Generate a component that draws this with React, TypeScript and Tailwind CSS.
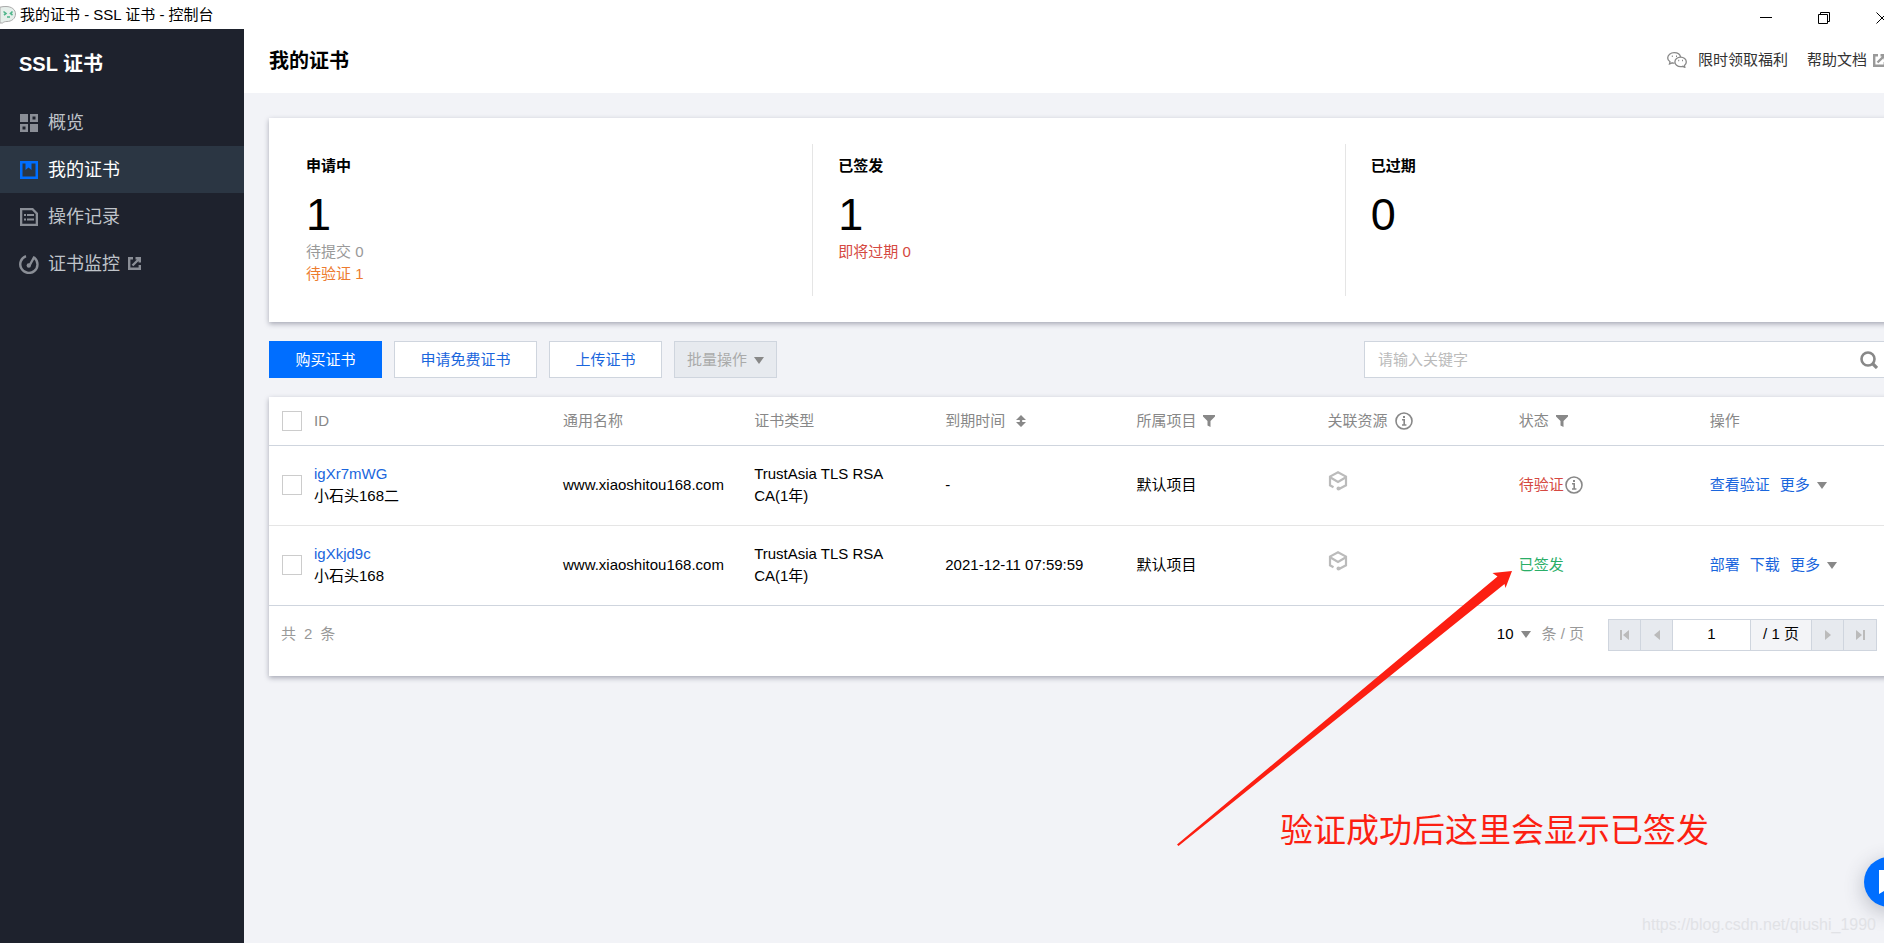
import type { ReactNode } from 'react';

const navItems = [
  { label: '概览', icon: <OverviewIcon /> },
  { label: '我的证书', icon: <CertIcon />, active: true },
  { label: '操作记录', icon: <LogIcon /> },
  { label: '证书监控', icon: <MonitorIcon />, external: true },
];

const rows = [
  {
    id: 'igXr7mWG',
    alias: '小石头168二',
    domain: 'www.xiaoshitou168.com',
    expires: '-',
    project: '默认项目',
    status: '待验证',
    pending: true,
    actions: ['查看验证'],
  },
  {
    id: 'igXkjd9c',
    alias: '小石头168',
    domain: 'www.xiaoshitou168.com',
    expires: '2021-12-11 07:59:59',
    project: '默认项目',
    status: '已签发',
    pending: false,
    actions: ['部署', '下载'],
  },
];

function OverviewIcon() {
  return (
    <svg className="w-[18px] h-[18px]" viewBox="0 0 18 18" fill="currentColor">
      <path d="M0 0h8v8H0zM10 10h8v8h-8z" />
      <path fillRule="evenodd" d="M10 0h8v8h-8zM12.500 2.500v3h3v-3zM0 10h8v8H0zM2.500 12.500v3h3v-3z" />
    </svg>
  );
}

function CertIcon() {
  return (
    <svg className="w-[18px] h-[18px]" viewBox="0 0 18 18" fill="#006eff">
      <path fillRule="evenodd" d="M0 0h18v18H0zM2.500 2.500v13h13v-13H11.500V9L8.500 6.500 5.500 9V2.500z" />
    </svg>
  );
}

function LogIcon() {
  return (
    <svg className="w-[18px] h-[18px]" viewBox="0 0 18 18" fill="currentColor">
      <path fillRule="evenodd" d="M0 0h13l5 5v13H0zM2.300 2.300v13.400h13.400V6L12 2.300z" />
      <path d="M4 6h2v2H4zM7 6h7v2H7zM4 10.500h2v2H4zM7 10.500h7v2H7z" />
    </svg>
  );
}

function MonitorIcon() {
  return (
    <svg className="w-5 h-5 -mx-px" viewBox="0 0 20 20" fill="none" stroke="currentColor" strokeWidth="2.400">
      <path d="M7 2.200A8.600 8.600 0 1 0 15.500 3.800" />
      <path d="M15.500 2.500 10.500 11.500" strokeWidth="2.400" />
      <circle cx="9.800" cy="11.500" r="2.200" fill="currentColor" stroke="none" />
    </svg>
  );
}

function ExternalIcon() {
  return (
    <svg className="w-[13px] h-[13px] shrink-0" viewBox="0 0 13 13" fill="none" stroke="currentColor" strokeWidth="2.400">
      <path d="M5 1.200H1.200v10.600h10.600V8" />
      <path d="M4.500 8.500 11 2M7.500 1.200h4.300v4.300" />
    </svg>
  );
}

function WechatIcon() {
  return (
    <svg className="w-5 h-4" viewBox="0 0 20 16" fill="none" stroke="#888" strokeWidth="1.300">
      <path d="M7.500 11.200c-.8 0-1.600-.1-2.300-.4L2.500 12l.5-2.200C1.500 8.800.7 7.500.7 5.900.7 3 3.600.7 7.200.7c3.200 0 5.900 1.900 6.400 4.400" />
      <path d="M13.600 5.200c-3.200 0-5.700 2.100-5.700 4.700s2.500 4.700 5.700 4.700c.7 0 1.400-.1 2-.3l2.200 1-.4-1.900c1.200-.9 1.900-2.100 1.900-3.500 0-2.600-2.500-4.700-5.700-4.700z" />
      <path d="M4.800 4.200h1M9 4.200h1M11.200 8.500h1M15 8.500h1" strokeWidth="1.400" />
    </svg>
  );
}

function InfoIcon() {
  return (
    <svg className="w-[18px] h-[18px] shrink-0" viewBox="0 0 18 18" fill="none" stroke="#888" strokeWidth="1.600">
      <circle cx="9" cy="9" r="8" />
      <path d="M7 7.800h2.200V13M7 13h4.400" />
      <path d="M8 5h2" strokeWidth="2" />
    </svg>
  );
}

function FilterIcon() {
  return (
    <svg className="w-3 h-3" viewBox="0 0 12 12" fill="#888">
      <path d="M0 0h12v1.500L7.500 6v6l-3-1.500V6L0 1.500z" />
    </svg>
  );
}

function SortIcon() {
  return (
    <svg className="w-[10px] h-3" viewBox="0 0 10 12" fill="#888">
      <path d="M5 0l5 5H6.200v2H10l-5 5-5-5h3.800V5H0z" />
    </svg>
  );
}

function CubeIcon() {
  return (
    <svg className="w-5 h-5 mb-2" viewBox="0 0 20 20" fill="none" stroke="#bbb" strokeWidth="2.200">
      <path d="M5.500 16.300 2 14.300V5.600L10 1.300l8 4.300v8.700l-6.500 3.500" />
      <path d="M2.500 6.500 10 11l7.500-4.500" />
      <circle cx="10.500" cy="17.600" r="2" fill="#bbb" stroke="none" />
    </svg>
  );
}

function Caret() {
  return (
    <svg className="w-[10px] h-[7px] shrink-0" viewBox="0 0 10 7" fill="#888">
      <path d="M0 0h10L5 7z" />
    </svg>
  );
}

function Stat({ title, value, children }: { title: string; value: number; children?: ReactNode }) {
  return (
    <div className="flex-1 h-[152px] pt-[11px] px-[25px] border-r border-[#e5e5e5] last:border-r-0 leading-[22px]">
      <h3 className="font-bold">{title}</h3>
      <p className="mt-3 text-[45px] leading-[52px]">{value}</p>
      {children}
    </div>
  );
}

function PageButton({ label, d }: { label: string; d: string }) {
  return (
    <button
      type="button"
      disabled
      aria-label={label}
      className="w-8 flex items-center justify-center bg-[#e7eaef] border-r border-[#cfd5de] last:border-r-0"
    >
      <svg className="w-[10px] h-[10px]" viewBox="0 0 10 10" fill="#bbb">
        <path d={d} />
      </svg>
    </button>
  );
}

function TitleBar() {
  return (
    <div className="h-[29px] flex items-center justify-between bg-white">
      <div className="flex items-center gap-1 pt-px">
        <svg className="w-4 h-[18px]" viewBox="0 0 16 18">
          <path d="M0 1.200C2 .6 4 .5 6 .5c5.500 0 9.500 3 9.500 7.500s-4 7.500-8.500 7.500c-2 0-3 .3-4.500 1.500L0 17z" fill="#e6efeb" stroke="#aaa" />
          <path d="M3.500 5.500 6 7.500 4 9M12.500 5.500 10.500 7.500l2 1.500M7 11h3" fill="none" stroke="#4fb58a" strokeWidth="1.600" />
        </svg>
        <span>我的证书 - SSL 证书 - 控制台</span>
      </div>
      <div className="flex items-center gap-[46px] -mr-1 mt-[7px]">
        <button type="button" aria-label="最小化">
          <svg className="w-3 h-3" viewBox="0 0 12 12" stroke="#000">
            <path d="M0 5.500h12" />
          </svg>
        </button>
        <button type="button" aria-label="还原">
          <svg className="w-3 h-3" viewBox="0 0 12 12" fill="none" stroke="#000">
            <path d="M.5 2.500h9v9h-9zM2.500 2.500v-2h9v9h-2" />
          </svg>
        </button>
        <button type="button" aria-label="关闭">
          <svg className="w-3 h-3" viewBox="0 0 12 12" stroke="#000">
            <path d="M.5.5l11 11M11.500.5l-11 11" />
          </svg>
        </button>
      </div>
    </div>
  );
}

function Sidebar() {
  return (
    <aside className="w-[244px] shrink-0 bg-[#1e222d] text-[#bfc3c9]">
      <h2 className="h-[70px] px-[19px] text-xl leading-[70px] font-bold text-white">SSL 证书</h2>
      <nav>
        {navItems.map((item) => (
          <a
            key={item.label}
            href="#"
            className={`h-[47px] px-5 flex items-center text-[18px] ${item.active ? 'bg-[#2b3643] text-white' : ''}`}
          >
            <span className={item.active ? '' : 'text-[#8a8e96]'}>{item.icon}</span>
            <span className="ml-[10px] mr-2 pt-0.5">{item.label}</span>
            {item.external && (
              <span className="text-[#8a8e96]">
                <ExternalIcon />
              </span>
            )}
          </a>
        ))}
      </nav>
    </aside>
  );
}

function CertTable() {
  return (
    <table className="w-full table-fixed text-left">
      <colgroup>
        <col className="w-[33px]" />
        <col className="w-[249px]" />
        <col span={7} />
      </colgroup>
      <thead>
        <tr className="h-12 border-b border-[#cfd5de] text-[#888] *:font-normal *:pl-3">
          <th>
            <input type="checkbox" aria-label="全选" className="block ml-px w-5 h-5 appearance-none border border-[#ccc] bg-white" />
          </th>
          <th>ID</th>
          <th>通用名称</th>
          <th>证书类型</th>
          <th>
            <span className="flex items-center gap-[11px]">
              到期时间 <SortIcon />
            </span>
          </th>
          <th>
            <span className="flex items-center gap-[7px]">
              所属项目 <FilterIcon />
            </span>
          </th>
          <th>
            <span className="flex items-center gap-[7px]">
              关联资源 <InfoIcon />
            </span>
          </th>
          <th>
            <span className="flex items-center gap-[7px]">
              状态 <FilterIcon />
            </span>
          </th>
          <th>操作</th>
        </tr>
      </thead>
      <tbody>
        {rows.map((row) => (
          <tr key={row.id} className="h-20 border-b border-[#e5e5e5] last:border-[#cfd5de] leading-[22px] *:pl-3">
            <td>
              <input
                type="checkbox"
                aria-label={row.id}
                className="block ml-px w-5 h-5 appearance-none border border-[#ccc] bg-white"
              />
            </td>
            <td>
              <a href="#" className="text-[#1a66dd]">
                {row.id}
              </a>
              <p>{row.alias}</p>
            </td>
            <td>{row.domain}</td>
            <td>
              TrustAsia TLS RSA
              <br />
              CA(1年)
            </td>
            <td>{row.expires}</td>
            <td>{row.project}</td>
            <td>
              <CubeIcon />
            </td>
            <td>
              <span className={`flex items-center gap-px ${row.pending ? 'text-[#d54941]' : 'text-[#2aae67]'}`}>
                {row.status}
                {row.pending && <InfoIcon />}
              </span>
            </td>
            <td>
              <div className="flex items-center gap-[10px] text-[#1a66dd]">
                {row.actions.map((action) => (
                  <a key={action} href="#">
                    {action}
                  </a>
                ))}
                <button type="button" className="flex items-center gap-[7px]">
                  更多 <Caret />
                </button>
              </div>
            </td>
          </tr>
        ))}
      </tbody>
    </table>
  );
}

function Pagination() {
  return (
    <div className="flex items-center justify-between pt-[13px] pb-[25px] px-3 text-[#999]">
      <span className="flex gap-2">
        <span>共</span>
        <span>2</span>
        <span>条</span>
      </span>
      <div className="flex items-center">
        <button type="button" className="flex items-center gap-2 text-black">
          10 <Caret />
        </button>
        <span className="ml-[10px] mr-6">条 / 页</span>
        <div className="h-8 flex border border-[#cfd5de] text-black">
          <PageButton label="首页" d="M0 0h2v10H0zM9 0v10L3 5z" />
          <PageButton label="上一页" d="M8 0v10L2 5z" />
          <input
            aria-label="页码"
            defaultValue="1"
            className="w-[78px] text-center bg-white border-r border-[#cfd5de] outline-none"
          />
          <span className="w-[61px] flex items-center justify-center bg-[#f3f4f7] border-r border-[#cfd5de]">/ 1 页</span>
          <PageButton label="下一页" d="M2 0v10l6-5z" />
          <PageButton label="末页" d="M8 0h2v10H8zM1 0v10l6-5z" />
        </div>
      </div>
    </div>
  );
}

export default function App() {
  return (
    <div className="relative min-h-screen flex flex-col overflow-hidden bg-[#f2f3f7] text-[15px] text-black font-['Liberation_Sans','Noto_Sans_CJK_SC',sans-serif]">
      <TitleBar />

      <div className="flex-1 flex">
        <Sidebar />

        <div className="flex-1 min-w-0">
          {/* Page header */}
          <header className="h-16 pl-[25px] flex items-center justify-between bg-white">
            <h1 className="text-xl font-bold">我的证书</h1>
            <div className="flex items-center -mr-[2px] pb-0.5 text-[#333] whitespace-nowrap">
              <WechatIcon />
              <a href="#" className="ml-[11px]">
                限时领取福利
              </a>
              <a href="#" className="ml-[19px] flex items-center gap-[6px]">
                帮助文档
                <span className="text-[#999]">
                  <ExternalIcon />
                </span>
              </a>
            </div>
          </header>

          <main className="pt-[25px] pl-[25px] -mr-[5px]">
            {/* Stats */}
            <section className="flex px-3 py-[26px] bg-white shadow-[0_2px_5px_rgba(54,58,80,0.4)]">
              <Stat title="申请中" value={1}>
                <p className="text-[#999]">待提交 0</p>
                <p className="text-[#ed7b2f]">待验证 1</p>
              </Stat>
              <Stat title="已签发" value={1}>
                <p className="text-[#d54941]">即将过期 0</p>
              </Stat>
              <Stat title="已过期" value={0} />
            </section>

            {/* Toolbar */}
            <div className="my-[19px] h-[37px] flex gap-3">
              <button type="button" className="w-[113px] pt-0.5 bg-[#006eff] text-white">
                购买证书
              </button>
              <button type="button" className="w-[143px] pt-0.5 border border-[#cfd5de] bg-white text-[#1a66dd]">
                申请免费证书
              </button>
              <button type="button" className="w-[113px] pt-0.5 border border-[#cfd5de] bg-white text-[#1a66dd]">
                上传证书
              </button>
              <button
                type="button"
                disabled
                className="w-[103px] pt-0.5 flex items-center justify-center gap-[7px] border border-[#cfd5de] bg-[#e7eaef] text-[#aaa]"
              >
                批量操作 <Caret />
              </button>
              <label className="ml-auto w-[525px] pl-[13px] pr-[10px] flex items-center border border-[#cfd5de] bg-white">
                <input type="text" placeholder="请输入关键字" className="flex-1 pt-0.5 outline-none placeholder:text-[#bbb]" />
                <svg className="w-[18px] h-[18px]" viewBox="0 0 18 18" fill="none" stroke="#888" strokeWidth="2.600">
                  <circle cx="8" cy="8" r="6.500" />
                  <path d="M12.500 12.500 17 17" strokeWidth="3.200" />
                </svg>
              </label>
            </div>

            {/* Certificates */}
            <section className="bg-white shadow-[0_2px_5px_rgba(54,58,80,0.4)]">
              <CertTable />
              <Pagination />
            </section>
          </main>
        </div>
      </div>

      {/* Annotation */}
      <svg
        className="absolute left-[1177px] top-[571px] w-[335px] h-[275px] pointer-events-none"
        viewBox="0 0 335 275"
        fill="#fc1f12"
      >
        <path d="M335 0 315.500 2l5 3.500L0 273.500l1.500 1.500L327.500 13l1 4z" />
      </svg>
      <p className="absolute left-[1280px] top-[806px] text-[33px] leading-[50px] text-[#fc1f12] whitespace-nowrap">
        验证成功后这里会显示已签发
      </p>

      {/* Help bubble */}
      <button
        type="button"
        aria-label="在线客服"
        className="absolute -right-[30px] bottom-9 w-[50px] h-[50px] rounded-full bg-[#006eff] flex items-center justify-center shadow-[0_5px_20px_rgba(54,58,80,0.3)]"
      >
        <svg className="w-5 h-6" viewBox="0 0 20 24" fill="#fff">
          <path d="M0 0h20v19H8l-8 5z" />
        </svg>
      </button>

      <span className="absolute right-2 bottom-[6px] text-[16px] leading-6 text-[#e1e2e6]">
        https://blog.csdn.net/qiushi_1990
      </span>
    </div>
  );
}
